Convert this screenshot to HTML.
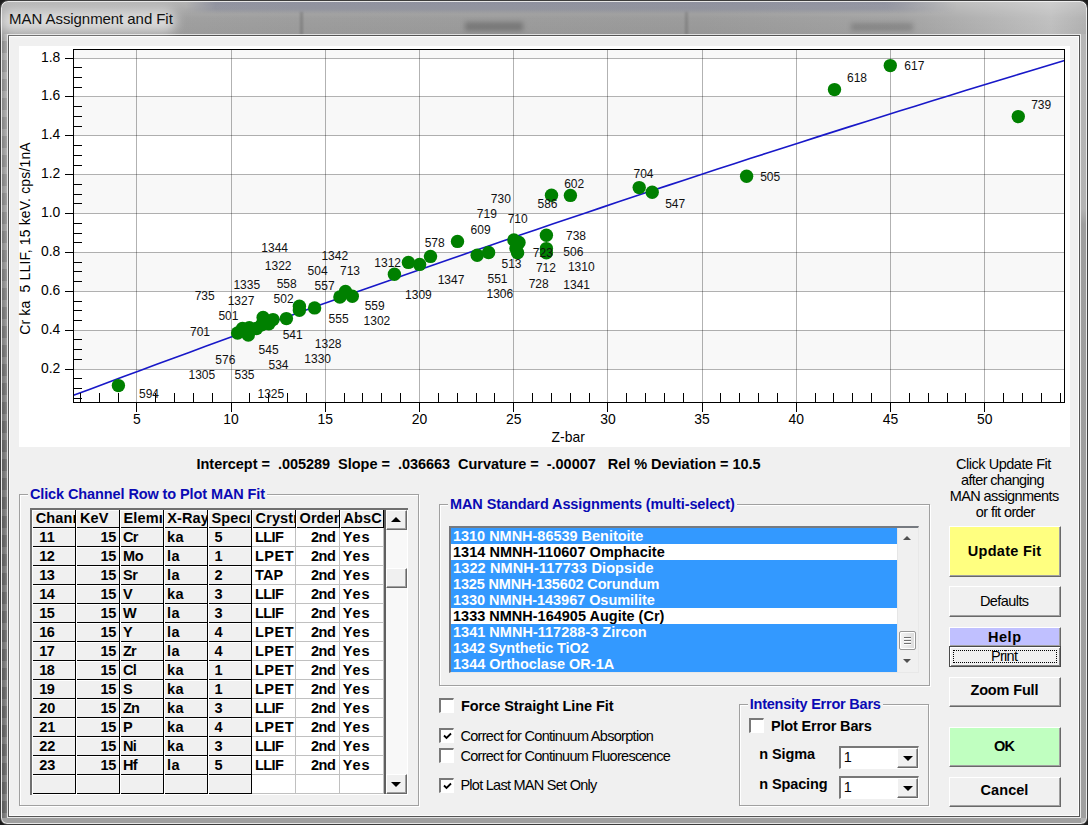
<!DOCTYPE html>
<html><head><meta charset="utf-8"><title>MAN Assignment and Fit</title>
<style>
html,body{margin:0;padding:0}
body{width:1088px;height:825px;overflow:hidden;background:#1c1c1c;position:relative;font-family:"Liberation Sans",sans-serif;font-size:13.33px}
.win{position:absolute;left:0;top:0;width:1086px;height:823px;border:1px solid #3c3c3c;border-radius:8px 8px 7px 7px;
 background:linear-gradient(90deg,#a2a2a2 0,#9c9c9c 300px,#9a9a9a 700px,#a2a2a2 900px,#b6b6b6 1000px,#c0c0c0 1050px,#b0b0b0 1088px);
 box-shadow:inset 0 0 0 1px rgba(255,255,255,.75)}
.glass{position:absolute;left:1px;top:1px;right:1px;height:33px;border-radius:6px 6px 0 0;background:linear-gradient(180deg,rgba(255,255,255,.22) 0,rgba(255,255,255,.12) 8px,rgba(255,255,255,.02) 16px,rgba(0,0,0,.02) 100%)}
.sideL{position:absolute;left:2px;top:34px;width:5px;height:784px;background:repeating-linear-gradient(180deg,rgba(255,255,255,.10) 0,rgba(255,255,255,.10) 7px,rgba(0,0,0,.05) 7px,rgba(0,0,0,.05) 19px),linear-gradient(90deg,rgba(0,0,0,.12),rgba(0,0,0,0) 50%,rgba(255,255,255,.18)),linear-gradient(180deg,#a2a2a2 0,#969696 160px,#7c7c7c 330px,#6e6e6e 420px,#6c6c6c 100%)}
.sideR{position:absolute;left:1081px;top:34px;width:5px;height:784px;background:linear-gradient(180deg,#b6b6b6 0,#b4b4b4 175px,#9e9e9e 190px,#a0a0a0 100%)}
.sideB{position:absolute;left:7px;top:818px;width:1074px;height:5px;background:#a0a0a0}
.client{position:absolute;left:9px;top:36px;width:1070px;height:780px;background:#f0f0f0;box-shadow:0 0 0 1px #555,0 0 0 2px rgba(255,255,255,.7),inset 0 0 0 1px rgba(255,255,255,.85)}
.t{position:absolute;white-space:pre;line-height:normal}
.chart{position:absolute;left:0;top:0}
.plot{position:absolute;left:19px;top:46px;width:1051px;height:401px;background:#fff}
.btn{position:absolute;box-sizing:border-box;background:#f0f0f0;border-top:1px solid #fff;border-left:1px solid #fff;border-right:1px solid #696969;border-bottom:1px solid #696969;box-shadow:inset -1px -1px 0 #a0a0a0}
.frame{position:absolute;box-sizing:border-box;border:1px solid #a0a0a0;box-shadow:1px 1px 0 #fff, inset 1px 1px 0 #fff}
.fx{position:absolute;background:linear-gradient(#fff,#fff) left/1px 100% no-repeat,linear-gradient(#000,#000) right/1px 100% no-repeat,linear-gradient(#fff,#fff) top/100% 1px no-repeat,linear-gradient(#000,#000) bottom/100% 1px no-repeat,#f0f0f0}
.wh{position:absolute;background:#fff;box-sizing:border-box;border-right:1px solid #c0c0c0;border-bottom:1px solid #c0c0c0}
.cb{position:absolute;width:15px;height:15px;box-sizing:border-box;background:#fff;border-top:2px solid #787878;border-left:2px solid #787878;border-right:1px solid #fff;border-bottom:1px solid #fff}
</style></head>
<body>
<div class="win"><div class="glass"></div><div style="position:absolute;left:185px;top:1px;width:770px;height:12px;background:linear-gradient(180deg,rgba(96,102,135,.42),rgba(96,102,135,.30) 60%,rgba(96,102,135,0));-webkit-mask-image:linear-gradient(90deg,transparent,#000 30px,#000 700px,transparent)"></div><div style="position:absolute;left:299px;top:11px;width:3px;height:23px;background:rgba(0,0,0,.16);filter:blur(1px)"></div><div style="position:absolute;left:684px;top:11px;width:3px;height:23px;background:rgba(0,0,0,.14);filter:blur(1px)"></div><div style="position:absolute;left:464px;top:21px;width:58px;height:9px;background:rgba(0,0,0,.22);filter:blur(2.5px)"></div><div style="position:absolute;left:850px;top:22px;width:62px;height:8px;background:rgba(0,0,0,.16);filter:blur(2.5px)"></div></div>
<div class="sideL"></div><div class="sideR"></div><div class="sideB"></div>
<div class="client"></div>
<div style="position:absolute;left:0px;top:10px;width:176px;height:22px;border-radius:11px;background:rgba(255,255,255,.62);filter:blur(6px)"></div>
<span class="t" style="left:9.10px;top:10px;font-size:15px;color:#111;letter-spacing:-0.065px;">MAN Assignment and Fit</span>
<div class="plot"></div>
<svg class="chart" width="1088" height="825" viewBox="0 0 1088 825">
<rect x="73.5" y="49.50" width="991.00" height="8.60" fill="#f8f8f8"/>
<rect x="73.5" y="96.97" width="991.00" height="38.88" fill="#f8f8f8"/>
<rect x="73.5" y="174.73" width="991.00" height="38.87" fill="#f8f8f8"/>
<rect x="73.5" y="252.47" width="991.00" height="38.88" fill="#f8f8f8"/>
<rect x="73.5" y="330.23" width="991.00" height="38.88" fill="#f8f8f8"/>
<line x1="136.50" y1="49.5" x2="136.50" y2="402.5" stroke="rgba(0,0,0,0.30)" stroke-width="1" shape-rendering="crispEdges"/>
<line x1="231.50" y1="49.5" x2="231.50" y2="402.5" stroke="rgba(0,0,0,0.30)" stroke-width="1" shape-rendering="crispEdges"/>
<line x1="325.50" y1="49.5" x2="325.50" y2="402.5" stroke="rgba(0,0,0,0.30)" stroke-width="1" shape-rendering="crispEdges"/>
<line x1="419.50" y1="49.5" x2="419.50" y2="402.5" stroke="rgba(0,0,0,0.30)" stroke-width="1" shape-rendering="crispEdges"/>
<line x1="513.50" y1="49.5" x2="513.50" y2="402.5" stroke="rgba(0,0,0,0.30)" stroke-width="1" shape-rendering="crispEdges"/>
<line x1="607.50" y1="49.5" x2="607.50" y2="402.5" stroke="rgba(0,0,0,0.30)" stroke-width="1" shape-rendering="crispEdges"/>
<line x1="702.50" y1="49.5" x2="702.50" y2="402.5" stroke="rgba(0,0,0,0.30)" stroke-width="1" shape-rendering="crispEdges"/>
<line x1="796.50" y1="49.5" x2="796.50" y2="402.5" stroke="rgba(0,0,0,0.30)" stroke-width="1" shape-rendering="crispEdges"/>
<line x1="890.50" y1="49.5" x2="890.50" y2="402.5" stroke="rgba(0,0,0,0.30)" stroke-width="1" shape-rendering="crispEdges"/>
<line x1="984.50" y1="49.5" x2="984.50" y2="402.5" stroke="rgba(0,0,0,0.30)" stroke-width="1" shape-rendering="crispEdges"/>
<line x1="73.5" y1="369.50" x2="1064.5" y2="369.50" stroke="rgba(0,0,0,0.30)" stroke-width="1" shape-rendering="crispEdges"/>
<line x1="73.5" y1="330.50" x2="1064.5" y2="330.50" stroke="rgba(0,0,0,0.30)" stroke-width="1" shape-rendering="crispEdges"/>
<line x1="73.5" y1="291.50" x2="1064.5" y2="291.50" stroke="rgba(0,0,0,0.30)" stroke-width="1" shape-rendering="crispEdges"/>
<line x1="73.5" y1="252.50" x2="1064.5" y2="252.50" stroke="rgba(0,0,0,0.30)" stroke-width="1" shape-rendering="crispEdges"/>
<line x1="73.5" y1="213.50" x2="1064.5" y2="213.50" stroke="rgba(0,0,0,0.30)" stroke-width="1" shape-rendering="crispEdges"/>
<line x1="73.5" y1="174.50" x2="1064.5" y2="174.50" stroke="rgba(0,0,0,0.30)" stroke-width="1" shape-rendering="crispEdges"/>
<line x1="73.5" y1="135.50" x2="1064.5" y2="135.50" stroke="rgba(0,0,0,0.30)" stroke-width="1" shape-rendering="crispEdges"/>
<line x1="73.5" y1="96.50" x2="1064.5" y2="96.50" stroke="rgba(0,0,0,0.30)" stroke-width="1" shape-rendering="crispEdges"/>
<line x1="73.5" y1="58.50" x2="1064.5" y2="58.50" stroke="rgba(0,0,0,0.30)" stroke-width="1" shape-rendering="crispEdges"/>
<polyline points="73.50,395.33 90.02,389.13 106.53,382.96 123.05,376.80 139.57,370.67 156.08,364.55 172.60,358.46 189.12,352.39 205.63,346.33 222.15,340.30 238.67,334.29 255.18,328.30 271.70,322.34 288.22,316.39 304.73,310.46 321.25,304.56 337.77,298.67 354.28,292.81 370.80,286.97 387.32,281.15 403.83,275.34 420.35,269.57 436.87,263.81 453.38,258.07 469.90,252.35 486.42,246.66 502.93,240.98 519.45,235.33 535.97,229.69 552.48,224.08 569.00,218.49 585.52,212.92 602.03,207.37 618.55,201.84 635.07,196.33 651.58,190.84 668.10,185.38 684.62,179.93 701.13,174.51 717.65,169.11 734.17,163.72 750.68,158.36 767.20,153.02 783.72,147.70 800.23,142.40 816.75,137.12 833.27,131.87 849.78,126.63 866.30,121.42 882.82,116.22 899.33,111.05 915.85,105.90 932.37,100.76 948.88,95.65 965.40,90.56 981.92,85.50 998.43,80.45 1014.95,75.42 1031.47,70.42 1047.98,65.43 1064.50,60.47" fill="none" stroke="#1818c8" stroke-width="1.6"/>
<path d="M80.50 402.5 V393.0 M99.50 402.5 V393.0 M118.50 402.5 V393.0 M136.50 402.5 V412.0 M155.50 402.5 V393.0 M174.50 402.5 V393.0 M193.50 402.5 V393.0 M212.50 402.5 V393.0 M231.50 402.5 V412.0 M249.50 402.5 V393.0 M268.50 402.5 V393.0 M287.50 402.5 V393.0 M306.50 402.5 V393.0 M325.50 402.5 V412.0 M344.50 402.5 V393.0 M362.50 402.5 V393.0 M381.50 402.5 V393.0 M400.50 402.5 V393.0 M419.50 402.5 V412.0 M438.50 402.5 V393.0 M457.50 402.5 V393.0 M476.50 402.5 V393.0 M494.50 402.5 V393.0 M513.50 402.5 V412.0 M532.50 402.5 V393.0 M551.50 402.5 V393.0 M570.50 402.5 V393.0 M589.50 402.5 V393.0 M607.50 402.5 V412.0 M626.50 402.5 V393.0 M645.50 402.5 V393.0 M664.50 402.5 V393.0 M683.50 402.5 V393.0 M702.50 402.5 V412.0 M720.50 402.5 V393.0 M739.50 402.5 V393.0 M758.50 402.5 V393.0 M777.50 402.5 V393.0 M796.50 402.5 V412.0 M815.50 402.5 V393.0 M833.50 402.5 V393.0 M852.50 402.5 V393.0 M871.50 402.5 V393.0 M890.50 402.5 V412.0 M909.50 402.5 V393.0 M928.50 402.5 V393.0 M947.50 402.5 V393.0 M965.50 402.5 V393.0 M984.50 402.5 V412.0 M1003.50 402.5 V393.0 M1022.50 402.5 V393.0 M1041.50 402.5 V393.0 M1060.50 402.5 V393.0 M73.5 398.50 H82.0 M73.5 388.50 H82.0 M73.5 378.50 H82.0 M73.5 369.50 H65.0 M73.5 359.50 H82.0 M73.5 349.50 H82.0 M73.5 339.50 H82.0 M73.5 330.50 H65.0 M73.5 320.50 H82.0 M73.5 310.50 H82.0 M73.5 301.50 H82.0 M73.5 291.50 H65.0 M73.5 281.50 H82.0 M73.5 271.50 H82.0 M73.5 262.50 H82.0 M73.5 252.50 H65.0 M73.5 242.50 H82.0 M73.5 233.50 H82.0 M73.5 223.50 H82.0 M73.5 213.50 H65.0 M73.5 203.50 H82.0 M73.5 194.50 H82.0 M73.5 184.50 H82.0 M73.5 174.50 H65.0 M73.5 165.50 H82.0 M73.5 155.50 H82.0 M73.5 145.50 H82.0 M73.5 135.50 H65.0 M73.5 126.50 H82.0 M73.5 116.50 H82.0 M73.5 106.50 H82.0 M73.5 96.50 H65.0 M73.5 87.50 H82.0 M73.5 77.50 H82.0 M73.5 67.50 H82.0 M73.5 58.50 H65.0" stroke="#000" stroke-width="1" fill="none" shape-rendering="crispEdges"/>
<rect x="73.5" y="49.5" width="991.00" height="353.00" fill="none" stroke="#000" stroke-width="1" shape-rendering="crispEdges"/>
<circle cx="118.4" cy="385.6" r="6.7" fill="#008000"/>
<circle cx="237.6" cy="333" r="6.7" fill="#008000"/>
<circle cx="242.5" cy="328.5" r="6.7" fill="#008000"/>
<circle cx="248.3" cy="335" r="6.7" fill="#008000"/>
<circle cx="249.3" cy="327.8" r="6.7" fill="#008000"/>
<circle cx="256.5" cy="328.5" r="6.7" fill="#008000"/>
<circle cx="263.1" cy="317.5" r="6.7" fill="#008000"/>
<circle cx="261.7" cy="324.8" r="6.7" fill="#008000"/>
<circle cx="268.9" cy="323.7" r="6.7" fill="#008000"/>
<circle cx="273" cy="319.6" r="6.7" fill="#008000"/>
<circle cx="286.4" cy="318.6" r="6.7" fill="#008000"/>
<circle cx="299.4" cy="306.2" r="6.7" fill="#008000"/>
<circle cx="299.4" cy="310.3" r="6.7" fill="#008000"/>
<circle cx="314.6" cy="307.9" r="6.7" fill="#008000"/>
<circle cx="339.9" cy="297" r="6.7" fill="#008000"/>
<circle cx="345.5" cy="291.4" r="6.7" fill="#008000"/>
<circle cx="352.3" cy="296.3" r="6.7" fill="#008000"/>
<circle cx="394.4" cy="274.3" r="6.7" fill="#008000"/>
<circle cx="408.4" cy="262.4" r="6.7" fill="#008000"/>
<circle cx="419.6" cy="264.4" r="6.7" fill="#008000"/>
<circle cx="430.5" cy="256.4" r="6.7" fill="#008000"/>
<circle cx="457.5" cy="241.4" r="6.7" fill="#008000"/>
<circle cx="477.2" cy="255.2" r="6.7" fill="#008000"/>
<circle cx="488.6" cy="252.5" r="6.7" fill="#008000"/>
<circle cx="513.9" cy="239.9" r="6.7" fill="#008000"/>
<circle cx="519" cy="242.4" r="6.7" fill="#008000"/>
<circle cx="516" cy="248.6" r="6.7" fill="#008000"/>
<circle cx="517.6" cy="252.7" r="6.7" fill="#008000"/>
<circle cx="546.4" cy="235.2" r="6.7" fill="#008000"/>
<circle cx="546.4" cy="248.6" r="6.7" fill="#008000"/>
<circle cx="546.4" cy="252.7" r="6.7" fill="#008000"/>
<circle cx="551.5" cy="195.2" r="6.7" fill="#008000"/>
<circle cx="570.4" cy="195.4" r="6.7" fill="#008000"/>
<circle cx="639.2" cy="187.6" r="6.7" fill="#008000"/>
<circle cx="652.2" cy="192.3" r="6.7" fill="#008000"/>
<circle cx="746.6" cy="176.3" r="6.7" fill="#008000"/>
<circle cx="834.5" cy="89.6" r="6.7" fill="#008000"/>
<circle cx="890.3" cy="65.6" r="6.7" fill="#008000"/>
<circle cx="1018.3" cy="116.6" r="6.7" fill="#008000"/>
<g font-family="Liberation Sans, sans-serif" font-size="12" fill="#111">
<text x="261.3" y="251.6">1344</text>
<text x="321.4" y="259.9">1342</text>
<text x="264.8" y="269.8">1322</text>
<text x="374.3" y="266.7">1312</text>
<text x="307.6" y="274.7">504</text>
<text x="340.0" y="274.7">713</text>
<text x="233.4" y="288.7">1335</text>
<text x="276.7" y="287.7">558</text>
<text x="314.6" y="289.7">557</text>
<text x="194.7" y="300.0">735</text>
<text x="227.7" y="304.6">1327</text>
<text x="273.6" y="303.1">502</text>
<text x="364.7" y="309.7">559</text>
<text x="218.4" y="319.6">501</text>
<text x="328.6" y="323.1">555</text>
<text x="363.6" y="324.8">1302</text>
<text x="190.0" y="335.7">701</text>
<text x="282.7" y="338.8">541</text>
<text x="314.8" y="347.8">1328</text>
<text x="258.6" y="353.6">545</text>
<text x="304.3" y="362.9">1330</text>
<text x="215.3" y="363.9">576</text>
<text x="268.5" y="369.0">534</text>
<text x="188.5" y="378.7">1305</text>
<text x="234.5" y="378.7">535</text>
<text x="257.5" y="397.9">1325</text>
<text x="139.0" y="397.6">594</text>
<text x="564.2" y="187.5">602</text>
<text x="490.8" y="202.6">730</text>
<text x="537.5" y="207.7">586</text>
<text x="476.8" y="217.7">719</text>
<text x="507.7" y="222.8">710</text>
<text x="470.6" y="233.7">609</text>
<text x="566.0" y="239.5">738</text>
<text x="424.7" y="246.5">578</text>
<text x="532.8" y="257.2">723</text>
<text x="563.3" y="256.4">506</text>
<text x="501.5" y="267.5">513</text>
<text x="535.9" y="272.3">712</text>
<text x="567.9" y="271.2">1310</text>
<text x="437.7" y="283.6">1347</text>
<text x="487.5" y="282.6">551</text>
<text x="528.7" y="288.3">728</text>
<text x="563.3" y="289.2">1341</text>
<text x="405.1" y="299.0">1309</text>
<text x="486.5" y="298.4">1306</text>
<text x="633.5" y="177.5">704</text>
<text x="665.2" y="207.6">547</text>
<text x="760.2" y="180.8">505</text>
<text x="847.0" y="82.0">618</text>
<text x="904.3" y="69.9">617</text>
<text x="1031.2" y="109.1">739</text>
</g>
<g font-family="Liberation Sans, sans-serif" font-size="13.9" fill="#000">
<text x="60.3" y="372.5" text-anchor="end">0.2</text>
<text x="60.3" y="333.6" text-anchor="end">0.4</text>
<text x="60.3" y="294.8" text-anchor="end">0.6</text>
<text x="60.3" y="255.9" text-anchor="end">0.8</text>
<text x="60.3" y="217.0" text-anchor="end">1.0</text>
<text x="60.3" y="178.1" text-anchor="end">1.2</text>
<text x="60.3" y="139.2" text-anchor="end">1.4</text>
<text x="60.3" y="100.4" text-anchor="end">1.6</text>
<text x="60.3" y="61.5" text-anchor="end">1.8</text>
<text x="136.9" y="423.6" text-anchor="middle">5</text>
<text x="231.1" y="423.6" text-anchor="middle">10</text>
<text x="325.3" y="423.6" text-anchor="middle">15</text>
<text x="419.5" y="423.6" text-anchor="middle">20</text>
<text x="513.7" y="423.6" text-anchor="middle">25</text>
<text x="607.9" y="423.6" text-anchor="middle">30</text>
<text x="702.1" y="423.6" text-anchor="middle">35</text>
<text x="796.3" y="423.6" text-anchor="middle">40</text>
<text x="890.5" y="423.6" text-anchor="middle">45</text>
<text x="984.7" y="423.6" text-anchor="middle">50</text>
<text x="568.2" y="441.5" text-anchor="middle">Z-bar</text>
<text transform="translate(29.7,334.8) rotate(-90)" textLength="192.4" lengthAdjust="spacing" xml:space="preserve">Cr ka  5 LLIF, 15 keV. cps/1nA</text>
</g>
</svg>
<span class="t" style="left:196.50px;top:456px;font-size:14.5px;color:#000;font-weight:bold;letter-spacing:-0.029px;">Intercept =  .005289  Slope =  .036663  Curvature =  -.00007   Rel % Deviation = 10.5</span>
<div class="frame" style="left:19px;top:494px;width:400px;height:312px"></div>
<div style="position:absolute;left:28px;top:488px;width:239px;height:14px;background:#f0f0f0"></div>
<span class="t" style="left:29.90px;top:486px;font-size:14.5px;color:#0a0ab4;font-weight:bold;letter-spacing:-0.101px;">Click Channel Row to Plot MAN Fit</span>
<div style="position:absolute;left:30px;top:508px;width:378px;height:287px;background:#fff;border-top:2px solid #707070;border-left:2px solid #707070;box-sizing:border-box"></div>
<div class="fx" style="left:32px;top:510px;width:44px;height:18px"></div>
<div class="fx" style="left:76px;top:510px;width:44px;height:18px"></div>
<div class="fx" style="left:120px;top:510px;width:44px;height:18px"></div>
<div class="fx" style="left:164px;top:510px;width:44px;height:18px"></div>
<div class="fx" style="left:208px;top:510px;width:44px;height:18px"></div>
<div class="fx" style="left:252px;top:510px;width:44px;height:18px"></div>
<div class="fx" style="left:296px;top:510px;width:44px;height:18px"></div>
<div class="fx" style="left:340px;top:510px;width:44px;height:18px"></div>
<div class="fx" style="left:32px;top:528px;width:44px;height:19px"></div>
<div class="fx" style="left:76px;top:528px;width:44px;height:19px"></div>
<div class="fx" style="left:120px;top:528px;width:44px;height:19px"></div>
<div class="fx" style="left:164px;top:528px;width:44px;height:19px"></div>
<div class="fx" style="left:208px;top:528px;width:44px;height:19px"></div>
<div class="wh" style="left:252px;top:528px;width:44px;height:19px"></div>
<div class="wh" style="left:296px;top:528px;width:44px;height:19px"></div>
<div class="wh" style="left:340px;top:528px;width:44px;height:19px"></div>
<div class="fx" style="left:32px;top:547px;width:44px;height:19px"></div>
<div class="fx" style="left:76px;top:547px;width:44px;height:19px"></div>
<div class="fx" style="left:120px;top:547px;width:44px;height:19px"></div>
<div class="fx" style="left:164px;top:547px;width:44px;height:19px"></div>
<div class="fx" style="left:208px;top:547px;width:44px;height:19px"></div>
<div class="wh" style="left:252px;top:547px;width:44px;height:19px"></div>
<div class="wh" style="left:296px;top:547px;width:44px;height:19px"></div>
<div class="wh" style="left:340px;top:547px;width:44px;height:19px"></div>
<div class="fx" style="left:32px;top:566px;width:44px;height:19px"></div>
<div class="fx" style="left:76px;top:566px;width:44px;height:19px"></div>
<div class="fx" style="left:120px;top:566px;width:44px;height:19px"></div>
<div class="fx" style="left:164px;top:566px;width:44px;height:19px"></div>
<div class="fx" style="left:208px;top:566px;width:44px;height:19px"></div>
<div class="wh" style="left:252px;top:566px;width:44px;height:19px"></div>
<div class="wh" style="left:296px;top:566px;width:44px;height:19px"></div>
<div class="wh" style="left:340px;top:566px;width:44px;height:19px"></div>
<div class="fx" style="left:32px;top:585px;width:44px;height:19px"></div>
<div class="fx" style="left:76px;top:585px;width:44px;height:19px"></div>
<div class="fx" style="left:120px;top:585px;width:44px;height:19px"></div>
<div class="fx" style="left:164px;top:585px;width:44px;height:19px"></div>
<div class="fx" style="left:208px;top:585px;width:44px;height:19px"></div>
<div class="wh" style="left:252px;top:585px;width:44px;height:19px"></div>
<div class="wh" style="left:296px;top:585px;width:44px;height:19px"></div>
<div class="wh" style="left:340px;top:585px;width:44px;height:19px"></div>
<div class="fx" style="left:32px;top:604px;width:44px;height:19px"></div>
<div class="fx" style="left:76px;top:604px;width:44px;height:19px"></div>
<div class="fx" style="left:120px;top:604px;width:44px;height:19px"></div>
<div class="fx" style="left:164px;top:604px;width:44px;height:19px"></div>
<div class="fx" style="left:208px;top:604px;width:44px;height:19px"></div>
<div class="wh" style="left:252px;top:604px;width:44px;height:19px"></div>
<div class="wh" style="left:296px;top:604px;width:44px;height:19px"></div>
<div class="wh" style="left:340px;top:604px;width:44px;height:19px"></div>
<div class="fx" style="left:32px;top:623px;width:44px;height:19px"></div>
<div class="fx" style="left:76px;top:623px;width:44px;height:19px"></div>
<div class="fx" style="left:120px;top:623px;width:44px;height:19px"></div>
<div class="fx" style="left:164px;top:623px;width:44px;height:19px"></div>
<div class="fx" style="left:208px;top:623px;width:44px;height:19px"></div>
<div class="wh" style="left:252px;top:623px;width:44px;height:19px"></div>
<div class="wh" style="left:296px;top:623px;width:44px;height:19px"></div>
<div class="wh" style="left:340px;top:623px;width:44px;height:19px"></div>
<div class="fx" style="left:32px;top:642px;width:44px;height:19px"></div>
<div class="fx" style="left:76px;top:642px;width:44px;height:19px"></div>
<div class="fx" style="left:120px;top:642px;width:44px;height:19px"></div>
<div class="fx" style="left:164px;top:642px;width:44px;height:19px"></div>
<div class="fx" style="left:208px;top:642px;width:44px;height:19px"></div>
<div class="wh" style="left:252px;top:642px;width:44px;height:19px"></div>
<div class="wh" style="left:296px;top:642px;width:44px;height:19px"></div>
<div class="wh" style="left:340px;top:642px;width:44px;height:19px"></div>
<div class="fx" style="left:32px;top:661px;width:44px;height:19px"></div>
<div class="fx" style="left:76px;top:661px;width:44px;height:19px"></div>
<div class="fx" style="left:120px;top:661px;width:44px;height:19px"></div>
<div class="fx" style="left:164px;top:661px;width:44px;height:19px"></div>
<div class="fx" style="left:208px;top:661px;width:44px;height:19px"></div>
<div class="wh" style="left:252px;top:661px;width:44px;height:19px"></div>
<div class="wh" style="left:296px;top:661px;width:44px;height:19px"></div>
<div class="wh" style="left:340px;top:661px;width:44px;height:19px"></div>
<div class="fx" style="left:32px;top:680px;width:44px;height:19px"></div>
<div class="fx" style="left:76px;top:680px;width:44px;height:19px"></div>
<div class="fx" style="left:120px;top:680px;width:44px;height:19px"></div>
<div class="fx" style="left:164px;top:680px;width:44px;height:19px"></div>
<div class="fx" style="left:208px;top:680px;width:44px;height:19px"></div>
<div class="wh" style="left:252px;top:680px;width:44px;height:19px"></div>
<div class="wh" style="left:296px;top:680px;width:44px;height:19px"></div>
<div class="wh" style="left:340px;top:680px;width:44px;height:19px"></div>
<div class="fx" style="left:32px;top:699px;width:44px;height:19px"></div>
<div class="fx" style="left:76px;top:699px;width:44px;height:19px"></div>
<div class="fx" style="left:120px;top:699px;width:44px;height:19px"></div>
<div class="fx" style="left:164px;top:699px;width:44px;height:19px"></div>
<div class="fx" style="left:208px;top:699px;width:44px;height:19px"></div>
<div class="wh" style="left:252px;top:699px;width:44px;height:19px"></div>
<div class="wh" style="left:296px;top:699px;width:44px;height:19px"></div>
<div class="wh" style="left:340px;top:699px;width:44px;height:19px"></div>
<div class="fx" style="left:32px;top:718px;width:44px;height:19px"></div>
<div class="fx" style="left:76px;top:718px;width:44px;height:19px"></div>
<div class="fx" style="left:120px;top:718px;width:44px;height:19px"></div>
<div class="fx" style="left:164px;top:718px;width:44px;height:19px"></div>
<div class="fx" style="left:208px;top:718px;width:44px;height:19px"></div>
<div class="wh" style="left:252px;top:718px;width:44px;height:19px"></div>
<div class="wh" style="left:296px;top:718px;width:44px;height:19px"></div>
<div class="wh" style="left:340px;top:718px;width:44px;height:19px"></div>
<div class="fx" style="left:32px;top:737px;width:44px;height:19px"></div>
<div class="fx" style="left:76px;top:737px;width:44px;height:19px"></div>
<div class="fx" style="left:120px;top:737px;width:44px;height:19px"></div>
<div class="fx" style="left:164px;top:737px;width:44px;height:19px"></div>
<div class="fx" style="left:208px;top:737px;width:44px;height:19px"></div>
<div class="wh" style="left:252px;top:737px;width:44px;height:19px"></div>
<div class="wh" style="left:296px;top:737px;width:44px;height:19px"></div>
<div class="wh" style="left:340px;top:737px;width:44px;height:19px"></div>
<div class="fx" style="left:32px;top:756px;width:44px;height:19px"></div>
<div class="fx" style="left:76px;top:756px;width:44px;height:19px"></div>
<div class="fx" style="left:120px;top:756px;width:44px;height:19px"></div>
<div class="fx" style="left:164px;top:756px;width:44px;height:19px"></div>
<div class="fx" style="left:208px;top:756px;width:44px;height:19px"></div>
<div class="wh" style="left:252px;top:756px;width:44px;height:19px"></div>
<div class="wh" style="left:296px;top:756px;width:44px;height:19px"></div>
<div class="wh" style="left:340px;top:756px;width:44px;height:19px"></div>
<div class="fx" style="left:32px;top:775px;width:44px;height:19px"></div>
<div class="fx" style="left:76px;top:775px;width:44px;height:19px"></div>
<div class="fx" style="left:120px;top:775px;width:44px;height:19px"></div>
<div class="fx" style="left:164px;top:775px;width:44px;height:19px"></div>
<div class="fx" style="left:208px;top:775px;width:44px;height:19px"></div>
<div class="wh" style="left:252px;top:775px;width:44px;height:19px"></div>
<div class="wh" style="left:296px;top:775px;width:44px;height:19px"></div>
<div class="wh" style="left:340px;top:775px;width:44px;height:19px"></div>
<div style="position:absolute;left:384px;top:510px;width:2px;height:284px;background:#606060"></div>
<div style="position:absolute;left:32px;top:510px;width:43px;height:17px;overflow:hidden"><span class="t" style="left:3.8px;top:0px;font-weight:bold;font-size:14.5px;letter-spacing:0.1px">Chanı</span></div>
<div style="position:absolute;left:76px;top:510px;width:43px;height:17px;overflow:hidden"><span class="t" style="left:4.0px;top:0px;font-weight:bold;font-size:14.5px;letter-spacing:0.1px">KeV</span></div>
<div style="position:absolute;left:120px;top:510px;width:43px;height:17px;overflow:hidden"><span class="t" style="left:3.6px;top:0px;font-weight:bold;font-size:14.5px;letter-spacing:0.1px">Elemı</span></div>
<div style="position:absolute;left:164px;top:510px;width:43px;height:17px;overflow:hidden"><span class="t" style="left:3.3px;top:0px;font-weight:bold;font-size:14.5px;letter-spacing:0.1px">X-Ray</span></div>
<div style="position:absolute;left:208px;top:510px;width:43px;height:17px;overflow:hidden"><span class="t" style="left:3.5px;top:0px;font-weight:bold;font-size:14.5px;letter-spacing:0.1px">Specı</span></div>
<div style="position:absolute;left:252px;top:510px;width:43px;height:17px;overflow:hidden"><span class="t" style="left:3.6px;top:0px;font-weight:bold;font-size:14.5px;letter-spacing:0.1px">Crystı</span></div>
<div style="position:absolute;left:296px;top:510px;width:43px;height:17px;overflow:hidden"><span class="t" style="left:3.5px;top:0px;font-weight:bold;font-size:14.5px;letter-spacing:0.1px">Order</span></div>
<div style="position:absolute;left:340px;top:510px;width:43px;height:17px;overflow:hidden"><span class="t" style="left:3.5px;top:0px;font-weight:bold;font-size:14.5px;letter-spacing:0.1px">AbsC</span></div>
<span class="t" style="left:39.30px;top:529px;font-size:14.5px;color:#000;font-weight:bold;letter-spacing:0.271px;">11</span>
<span class="t" style="left:100.50px;top:529px;font-size:14.5px;color:#000;font-weight:bold;letter-spacing:-0.429px;">15</span>
<span class="t" style="left:123.00px;top:529px;font-size:14.5px;color:#000;font-weight:bold;letter-spacing:-0.800px;">Cr</span>
<span class="t" style="left:167.10px;top:529px;font-size:14.5px;color:#000;font-weight:bold;letter-spacing:0.300px;">ka</span>
<span class="t" style="left:214.40px;top:529px;font-size:14.5px;color:#000;font-weight:bold;">5</span>
<span class="t" style="left:255.00px;top:529px;font-size:14.5px;color:#000;font-weight:bold;letter-spacing:-0.600px;">LLIF</span>
<span class="t" style="left:311.10px;top:529px;font-size:14.5px;color:#000;font-weight:bold;letter-spacing:-0.539px;">2nd</span>
<span class="t" style="left:342.70px;top:529px;font-size:14.5px;color:#000;font-weight:bold;letter-spacing:0.950px;">Yes</span>
<span class="t" style="left:39.30px;top:548px;font-size:14.5px;color:#000;font-weight:bold;letter-spacing:-0.529px;">12</span>
<span class="t" style="left:100.50px;top:548px;font-size:14.5px;color:#000;font-weight:bold;letter-spacing:-0.429px;">15</span>
<span class="t" style="left:123.00px;top:548px;font-size:14.5px;color:#000;font-weight:bold;letter-spacing:-0.436px;">Mo</span>
<span class="t" style="left:167.10px;top:548px;font-size:14.5px;color:#000;font-weight:bold;letter-spacing:0.300px;">la</span>
<span class="t" style="left:214.40px;top:548px;font-size:14.5px;color:#000;font-weight:bold;">1</span>
<span class="t" style="left:255.00px;top:548px;font-size:14.5px;color:#000;font-weight:bold;letter-spacing:0.481px;">LPET</span>
<span class="t" style="left:311.10px;top:548px;font-size:14.5px;color:#000;font-weight:bold;letter-spacing:-0.539px;">2nd</span>
<span class="t" style="left:342.70px;top:548px;font-size:14.5px;color:#000;font-weight:bold;letter-spacing:0.950px;">Yes</span>
<span class="t" style="left:39.30px;top:567px;font-size:14.5px;color:#000;font-weight:bold;letter-spacing:-0.529px;">13</span>
<span class="t" style="left:100.50px;top:567px;font-size:14.5px;color:#000;font-weight:bold;letter-spacing:-0.429px;">15</span>
<span class="t" style="left:123.00px;top:567px;font-size:14.5px;color:#000;font-weight:bold;letter-spacing:-0.414px;">Sr</span>
<span class="t" style="left:167.10px;top:567px;font-size:14.5px;color:#000;font-weight:bold;letter-spacing:0.300px;">la</span>
<span class="t" style="left:214.40px;top:567px;font-size:14.5px;color:#000;font-weight:bold;">2</span>
<span class="t" style="left:255.00px;top:567px;font-size:14.5px;color:#000;font-weight:bold;letter-spacing:0.138px;">TAP</span>
<span class="t" style="left:311.10px;top:567px;font-size:14.5px;color:#000;font-weight:bold;letter-spacing:-0.539px;">2nd</span>
<span class="t" style="left:342.70px;top:567px;font-size:14.5px;color:#000;font-weight:bold;letter-spacing:0.950px;">Yes</span>
<span class="t" style="left:39.30px;top:586px;font-size:14.5px;color:#000;font-weight:bold;letter-spacing:-0.529px;">14</span>
<span class="t" style="left:100.50px;top:586px;font-size:14.5px;color:#000;font-weight:bold;letter-spacing:-0.429px;">15</span>
<span class="t" style="left:123.00px;top:586px;font-size:14.5px;color:#000;font-weight:bold;letter-spacing:-0.800px;">V</span>
<span class="t" style="left:167.10px;top:586px;font-size:14.5px;color:#000;font-weight:bold;letter-spacing:0.300px;">ka</span>
<span class="t" style="left:214.40px;top:586px;font-size:14.5px;color:#000;font-weight:bold;">3</span>
<span class="t" style="left:255.00px;top:586px;font-size:14.5px;color:#000;font-weight:bold;letter-spacing:-0.600px;">LLIF</span>
<span class="t" style="left:311.10px;top:586px;font-size:14.5px;color:#000;font-weight:bold;letter-spacing:-0.539px;">2nd</span>
<span class="t" style="left:342.70px;top:586px;font-size:14.5px;color:#000;font-weight:bold;letter-spacing:0.950px;">Yes</span>
<span class="t" style="left:39.30px;top:605px;font-size:14.5px;color:#000;font-weight:bold;letter-spacing:-0.529px;">15</span>
<span class="t" style="left:100.50px;top:605px;font-size:14.5px;color:#000;font-weight:bold;letter-spacing:-0.429px;">15</span>
<span class="t" style="left:123.00px;top:605px;font-size:14.5px;color:#000;font-weight:bold;letter-spacing:-0.800px;">W</span>
<span class="t" style="left:167.10px;top:605px;font-size:14.5px;color:#000;font-weight:bold;letter-spacing:0.300px;">la</span>
<span class="t" style="left:214.40px;top:605px;font-size:14.5px;color:#000;font-weight:bold;">3</span>
<span class="t" style="left:255.00px;top:605px;font-size:14.5px;color:#000;font-weight:bold;letter-spacing:-0.600px;">LLIF</span>
<span class="t" style="left:311.10px;top:605px;font-size:14.5px;color:#000;font-weight:bold;letter-spacing:-0.539px;">2nd</span>
<span class="t" style="left:342.70px;top:605px;font-size:14.5px;color:#000;font-weight:bold;letter-spacing:0.950px;">Yes</span>
<span class="t" style="left:39.30px;top:624px;font-size:14.5px;color:#000;font-weight:bold;letter-spacing:-0.529px;">16</span>
<span class="t" style="left:100.50px;top:624px;font-size:14.5px;color:#000;font-weight:bold;letter-spacing:-0.429px;">15</span>
<span class="t" style="left:123.00px;top:624px;font-size:14.5px;color:#000;font-weight:bold;letter-spacing:-0.800px;">Y</span>
<span class="t" style="left:167.10px;top:624px;font-size:14.5px;color:#000;font-weight:bold;letter-spacing:0.300px;">la</span>
<span class="t" style="left:214.40px;top:624px;font-size:14.5px;color:#000;font-weight:bold;">4</span>
<span class="t" style="left:255.00px;top:624px;font-size:14.5px;color:#000;font-weight:bold;letter-spacing:0.481px;">LPET</span>
<span class="t" style="left:311.10px;top:624px;font-size:14.5px;color:#000;font-weight:bold;letter-spacing:-0.539px;">2nd</span>
<span class="t" style="left:342.70px;top:624px;font-size:14.5px;color:#000;font-weight:bold;letter-spacing:0.950px;">Yes</span>
<span class="t" style="left:39.30px;top:643px;font-size:14.5px;color:#000;font-weight:bold;letter-spacing:-0.529px;">17</span>
<span class="t" style="left:100.50px;top:643px;font-size:14.5px;color:#000;font-weight:bold;letter-spacing:-0.429px;">15</span>
<span class="t" style="left:123.00px;top:643px;font-size:14.5px;color:#000;font-weight:bold;letter-spacing:-0.800px;">Zr</span>
<span class="t" style="left:167.10px;top:643px;font-size:14.5px;color:#000;font-weight:bold;letter-spacing:0.300px;">la</span>
<span class="t" style="left:214.40px;top:643px;font-size:14.5px;color:#000;font-weight:bold;">4</span>
<span class="t" style="left:255.00px;top:643px;font-size:14.5px;color:#000;font-weight:bold;letter-spacing:0.481px;">LPET</span>
<span class="t" style="left:311.10px;top:643px;font-size:14.5px;color:#000;font-weight:bold;letter-spacing:-0.539px;">2nd</span>
<span class="t" style="left:342.70px;top:643px;font-size:14.5px;color:#000;font-weight:bold;letter-spacing:0.950px;">Yes</span>
<span class="t" style="left:39.30px;top:662px;font-size:14.5px;color:#000;font-weight:bold;letter-spacing:-0.529px;">18</span>
<span class="t" style="left:100.50px;top:662px;font-size:14.5px;color:#000;font-weight:bold;letter-spacing:-0.429px;">15</span>
<span class="t" style="left:123.00px;top:662px;font-size:14.5px;color:#000;font-weight:bold;letter-spacing:-0.800px;">Cl</span>
<span class="t" style="left:167.10px;top:662px;font-size:14.5px;color:#000;font-weight:bold;letter-spacing:0.300px;">ka</span>
<span class="t" style="left:214.40px;top:662px;font-size:14.5px;color:#000;font-weight:bold;">1</span>
<span class="t" style="left:255.00px;top:662px;font-size:14.5px;color:#000;font-weight:bold;letter-spacing:0.481px;">LPET</span>
<span class="t" style="left:311.10px;top:662px;font-size:14.5px;color:#000;font-weight:bold;letter-spacing:-0.539px;">2nd</span>
<span class="t" style="left:342.70px;top:662px;font-size:14.5px;color:#000;font-weight:bold;letter-spacing:0.950px;">Yes</span>
<span class="t" style="left:39.30px;top:681px;font-size:14.5px;color:#000;font-weight:bold;letter-spacing:-0.529px;">19</span>
<span class="t" style="left:100.50px;top:681px;font-size:14.5px;color:#000;font-weight:bold;letter-spacing:-0.429px;">15</span>
<span class="t" style="left:123.00px;top:681px;font-size:14.5px;color:#000;font-weight:bold;letter-spacing:-0.800px;">S</span>
<span class="t" style="left:167.10px;top:681px;font-size:14.5px;color:#000;font-weight:bold;letter-spacing:0.300px;">ka</span>
<span class="t" style="left:214.40px;top:681px;font-size:14.5px;color:#000;font-weight:bold;">1</span>
<span class="t" style="left:255.00px;top:681px;font-size:14.5px;color:#000;font-weight:bold;letter-spacing:0.481px;">LPET</span>
<span class="t" style="left:311.10px;top:681px;font-size:14.5px;color:#000;font-weight:bold;letter-spacing:-0.539px;">2nd</span>
<span class="t" style="left:342.70px;top:681px;font-size:14.5px;color:#000;font-weight:bold;letter-spacing:0.950px;">Yes</span>
<span class="t" style="left:39.30px;top:700px;font-size:14.5px;color:#000;font-weight:bold;letter-spacing:-0.129px;">20</span>
<span class="t" style="left:100.50px;top:700px;font-size:14.5px;color:#000;font-weight:bold;letter-spacing:-0.429px;">15</span>
<span class="t" style="left:123.00px;top:700px;font-size:14.5px;color:#000;font-weight:bold;letter-spacing:-0.800px;">Zn</span>
<span class="t" style="left:167.10px;top:700px;font-size:14.5px;color:#000;font-weight:bold;letter-spacing:0.300px;">ka</span>
<span class="t" style="left:214.40px;top:700px;font-size:14.5px;color:#000;font-weight:bold;">3</span>
<span class="t" style="left:255.00px;top:700px;font-size:14.5px;color:#000;font-weight:bold;letter-spacing:-0.600px;">LLIF</span>
<span class="t" style="left:311.10px;top:700px;font-size:14.5px;color:#000;font-weight:bold;letter-spacing:-0.539px;">2nd</span>
<span class="t" style="left:342.70px;top:700px;font-size:14.5px;color:#000;font-weight:bold;letter-spacing:0.950px;">Yes</span>
<span class="t" style="left:39.30px;top:719px;font-size:14.5px;color:#000;font-weight:bold;letter-spacing:-0.129px;">21</span>
<span class="t" style="left:100.50px;top:719px;font-size:14.5px;color:#000;font-weight:bold;letter-spacing:-0.429px;">15</span>
<span class="t" style="left:123.00px;top:719px;font-size:14.5px;color:#000;font-weight:bold;letter-spacing:-0.800px;">P</span>
<span class="t" style="left:167.10px;top:719px;font-size:14.5px;color:#000;font-weight:bold;letter-spacing:0.300px;">ka</span>
<span class="t" style="left:214.40px;top:719px;font-size:14.5px;color:#000;font-weight:bold;">4</span>
<span class="t" style="left:255.00px;top:719px;font-size:14.5px;color:#000;font-weight:bold;letter-spacing:0.481px;">LPET</span>
<span class="t" style="left:311.10px;top:719px;font-size:14.5px;color:#000;font-weight:bold;letter-spacing:-0.539px;">2nd</span>
<span class="t" style="left:342.70px;top:719px;font-size:14.5px;color:#000;font-weight:bold;letter-spacing:0.950px;">Yes</span>
<span class="t" style="left:39.30px;top:738px;font-size:14.5px;color:#000;font-weight:bold;letter-spacing:-0.129px;">22</span>
<span class="t" style="left:100.50px;top:738px;font-size:14.5px;color:#000;font-weight:bold;letter-spacing:-0.429px;">15</span>
<span class="t" style="left:123.00px;top:738px;font-size:14.5px;color:#000;font-weight:bold;letter-spacing:-0.800px;">Ni</span>
<span class="t" style="left:167.10px;top:738px;font-size:14.5px;color:#000;font-weight:bold;letter-spacing:0.300px;">ka</span>
<span class="t" style="left:214.40px;top:738px;font-size:14.5px;color:#000;font-weight:bold;">3</span>
<span class="t" style="left:255.00px;top:738px;font-size:14.5px;color:#000;font-weight:bold;letter-spacing:-0.600px;">LLIF</span>
<span class="t" style="left:311.10px;top:738px;font-size:14.5px;color:#000;font-weight:bold;letter-spacing:-0.539px;">2nd</span>
<span class="t" style="left:342.70px;top:738px;font-size:14.5px;color:#000;font-weight:bold;letter-spacing:0.950px;">Yes</span>
<span class="t" style="left:39.30px;top:757px;font-size:14.5px;color:#000;font-weight:bold;letter-spacing:-0.129px;">23</span>
<span class="t" style="left:100.50px;top:757px;font-size:14.5px;color:#000;font-weight:bold;letter-spacing:-0.429px;">15</span>
<span class="t" style="left:123.00px;top:757px;font-size:14.5px;color:#000;font-weight:bold;letter-spacing:-0.800px;">Hf</span>
<span class="t" style="left:167.10px;top:757px;font-size:14.5px;color:#000;font-weight:bold;letter-spacing:0.300px;">la</span>
<span class="t" style="left:214.40px;top:757px;font-size:14.5px;color:#000;font-weight:bold;">5</span>
<span class="t" style="left:255.00px;top:757px;font-size:14.5px;color:#000;font-weight:bold;letter-spacing:-0.600px;">LLIF</span>
<span class="t" style="left:311.10px;top:757px;font-size:14.5px;color:#000;font-weight:bold;letter-spacing:-0.539px;">2nd</span>
<span class="t" style="left:342.70px;top:757px;font-size:14.5px;color:#000;font-weight:bold;letter-spacing:0.950px;">Yes</span>
<div style="position:absolute;left:386px;top:510px;width:21px;height:284px;background:#f8f8f8"></div>
<div style="position:absolute;left:386px;top:510px;width:21px;height:20px;background:#f0f0f0;box-sizing:border-box;border-top:1px solid #fff;border-left:1px solid #fff;border-right:1px solid #696969;border-bottom:1px solid #696969;box-shadow:inset -1px -1px 0 #a0a0a0,inset 1px 1px 0 #f0f0f0"><div style="position:absolute;left:3.5px;top:5.5px;width:0;height:0;border-left:5px solid transparent;border-right:5px solid transparent;border-bottom:5.5px solid #000"></div></div>
<div style="position:absolute;left:386px;top:568px;width:21px;height:20px;background:#f0f0f0;box-sizing:border-box;border-top:1px solid #fff;border-left:1px solid #fff;border-right:1px solid #696969;border-bottom:1px solid #696969;box-shadow:inset -1px -1px 0 #a0a0a0,inset 1px 1px 0 #f0f0f0"></div>
<div style="position:absolute;left:386px;top:774px;width:21px;height:20px;background:#f0f0f0;box-sizing:border-box;border-top:1px solid #fff;border-left:1px solid #fff;border-right:1px solid #696969;border-bottom:1px solid #696969;box-shadow:inset -1px -1px 0 #a0a0a0,inset 1px 1px 0 #f0f0f0"><div style="position:absolute;left:3.5px;top:7px;width:0;height:0;border-left:5px solid transparent;border-right:5px solid transparent;border-top:5.5px solid #000"></div></div>
<div class="frame" style="left:439px;top:504px;width:491px;height:182px"></div>
<div style="position:absolute;left:448px;top:498px;width:289px;height:14px;background:#f0f0f0"></div>
<span class="t" style="left:450.00px;top:496px;font-size:14.5px;color:#0a0ab4;font-weight:bold;letter-spacing:-0.105px;">MAN Standard Assignments (multi-select)</span>
<div style="position:absolute;left:449px;top:526px;width:470px;height:147px;background:#fff;box-sizing:border-box;border-top:2px solid #767a80;border-left:2px solid #7a7a7a;border-left-color:rgba(110,110,115,.95);border-right:1px solid #e8e8e8;border-bottom:1px solid #e8e8e8"></div>
<div style="position:absolute;left:451px;top:528px;width:446px;height:16px;background:#3399ff"></div>
<span class="t" style="left:453.00px;top:528px;font-size:14.5px;color:#fff;font-weight:bold;letter-spacing:-0.024px;">1310 NMNH-86539 Benitoite</span>
<span class="t" style="left:453.00px;top:544px;font-size:14.5px;color:#000;font-weight:bold;letter-spacing:0.022px;">1314 NMNH-110607 Omphacite</span>
<div style="position:absolute;left:451px;top:560px;width:446px;height:16px;background:#3399ff"></div>
<span class="t" style="left:453.00px;top:560px;font-size:14.5px;color:#fff;font-weight:bold;letter-spacing:0.127px;">1322 NMNH-117733 Diopside</span>
<div style="position:absolute;left:451px;top:576px;width:446px;height:16px;background:#3399ff"></div>
<span class="t" style="left:453.00px;top:576px;font-size:14.5px;color:#fff;font-weight:bold;letter-spacing:-0.159px;">1325 NMNH-135602 Corundum</span>
<div style="position:absolute;left:451px;top:592px;width:446px;height:16px;background:#3399ff"></div>
<span class="t" style="left:453.00px;top:592px;font-size:14.5px;color:#fff;font-weight:bold;letter-spacing:-0.052px;">1330 NMNH-143967 Osumilite</span>
<span class="t" style="left:453.00px;top:608px;font-size:14.5px;color:#000;font-weight:bold;">1333 NMNH-164905 Augite (Cr)</span>
<div style="position:absolute;left:451px;top:624px;width:446px;height:16px;background:#3399ff"></div>
<span class="t" style="left:453.00px;top:624px;font-size:14.5px;color:#fff;font-weight:bold;letter-spacing:0.012px;">1341 NMNH-117288-3 Zircon</span>
<div style="position:absolute;left:451px;top:640px;width:446px;height:16px;background:#3399ff"></div>
<span class="t" style="left:453.00px;top:640px;font-size:14.5px;color:#fff;font-weight:bold;letter-spacing:-0.097px;">1342 Synthetic TiO2</span>
<div style="position:absolute;left:451px;top:656px;width:446px;height:16px;background:#3399ff"></div>
<span class="t" style="left:453.00px;top:656px;font-size:14.5px;color:#fff;font-weight:bold;letter-spacing:0.001px;">1344 Orthoclase OR-1A</span>
<div style="position:absolute;left:897px;top:528px;width:21px;height:144px;background:#f0f0f0;border-left:1px solid #e6e6e6;box-sizing:border-box"></div>
<div style="position:absolute;left:903px;top:536px;width:0px;height:0px;border-left:4px solid transparent;border-right:4px solid transparent;border-bottom:4px solid #505050"></div>
<div style="position:absolute;left:903px;top:659px;width:0px;height:0px;border-left:4px solid transparent;border-right:4px solid transparent;border-top:4px solid #505050"></div>
<div style="position:absolute;left:899px;top:631px;width:17px;height:19px;box-sizing:border-box;border:1px solid #979797;border-radius:2px;background:linear-gradient(90deg,#f4f4f4,#dcdcdc);box-shadow:inset 0 0 0 1px #fff"><div style="position:absolute;left:4px;top:5px;width:7px;height:1px;background:#707070;box-shadow:0 1px 0 #fff,0 3px 0 #707070,0 4px 0 #fff,0 6px 0 #707070,0 7px 0 #fff"></div></div>
<div class="cb" style="left:439px;top:698px"></div>
<span class="t" style="left:461.00px;top:698px;font-size:14.5px;color:#000;font-weight:bold;letter-spacing:-0.058px;">Force Straight Line Fit</span>
<div class="cb" style="left:439px;top:728px"><svg width="9" height="9" viewBox="0 0 9 9" style="position:absolute;left:1.5px;top:1.5px"><path d="M1 3.5 L3.5 6 L8 1.5" stroke="#000" stroke-width="1.8" fill="none"/></svg></div>
<span class="t" style="left:460.40px;top:728px;font-size:14.5px;color:#000;letter-spacing:-0.700px;">Correct for Continuum Absorption</span>
<div class="cb" style="left:439px;top:748px"></div>
<span class="t" style="left:460.40px;top:748px;font-size:14.5px;color:#000;letter-spacing:-0.706px;">Correct for Continuum Fluorescence</span>
<div class="cb" style="left:439px;top:778px"><svg width="9" height="9" viewBox="0 0 9 9" style="position:absolute;left:1.5px;top:1.5px"><path d="M1 3.5 L3.5 6 L8 1.5" stroke="#000" stroke-width="1.8" fill="none"/></svg></div>
<span class="t" style="left:460.40px;top:777px;font-size:14.5px;color:#000;letter-spacing:-0.734px;">Plot Last MAN Set Only</span>
<div class="frame" style="left:739px;top:704px;width:190px;height:102px"></div>
<div style="position:absolute;left:748px;top:698px;width:135px;height:14px;background:#f0f0f0"></div>
<span class="t" style="left:749.70px;top:696px;font-size:14.5px;color:#0a0ab4;font-weight:bold;letter-spacing:-0.220px;">Intensity Error Bars</span>
<div class="cb" style="left:749px;top:718px"></div>
<span class="t" style="left:770.90px;top:718px;font-size:14.5px;color:#000;font-weight:bold;letter-spacing:-0.153px;">Plot Error Bars</span>
<span class="t" style="left:759.30px;top:746px;font-size:14.5px;color:#000;font-weight:bold;letter-spacing:-0.100px;">n Sigma</span>
<span class="t" style="left:759.30px;top:776px;font-size:14.5px;color:#000;font-weight:bold;letter-spacing:-0.123px;">n Spacing</span>
<div style="position:absolute;left:839px;top:746px;width:80px;height:23px;background:#fff;box-sizing:border-box;border-top:2px solid #787878;border-left:2px solid #787878;border-right:1px solid #fff;border-bottom:1px solid #fff"></div>
<div style="position:absolute;left:897px;top:748px;width:21px;height:20px;background:#f0f0f0;box-sizing:border-box;border-top:1px solid #fff;border-left:1px solid #fff;border-right:1px solid #696969;border-bottom:1px solid #696969;box-shadow:inset -1px -1px 0 #a0a0a0,inset 1px 1px 0 #f0f0f0"><div style="position:absolute;left:4.5px;top:7px;width:0;height:0;border-left:5px solid transparent;border-right:5px solid transparent;border-top:5.5px solid #000"></div></div>
<span class="t" style="left:843.70px;top:749px;font-size:14.5px;color:#000;">1</span>
<div style="position:absolute;left:839px;top:776px;width:80px;height:23px;background:#fff;box-sizing:border-box;border-top:2px solid #787878;border-left:2px solid #787878;border-right:1px solid #fff;border-bottom:1px solid #fff"></div>
<div style="position:absolute;left:897px;top:778px;width:21px;height:20px;background:#f0f0f0;box-sizing:border-box;border-top:1px solid #fff;border-left:1px solid #fff;border-right:1px solid #696969;border-bottom:1px solid #696969;box-shadow:inset -1px -1px 0 #a0a0a0,inset 1px 1px 0 #f0f0f0"><div style="position:absolute;left:4.5px;top:7px;width:0;height:0;border-left:5px solid transparent;border-right:5px solid transparent;border-top:5.5px solid #000"></div></div>
<span class="t" style="left:843.70px;top:779px;font-size:14.5px;color:#000;">1</span>
<span class="t" style="left:956.10px;top:456px;font-size:14.5px;color:#000;letter-spacing:-0.476px;">Click Update Fit</span>
<span class="t" style="left:961.00px;top:472px;font-size:14.5px;color:#000;letter-spacing:-0.638px;">after changing</span>
<span class="t" style="left:949.70px;top:488px;font-size:14.5px;color:#000;letter-spacing:-0.582px;">MAN assignments</span>
<span class="t" style="left:975.80px;top:504px;font-size:14.5px;color:#000;letter-spacing:-0.589px;">or fit order</span>
<div class="btn" style="left:949px;top:526px;width:112px;height:51px;background:#ffff80;"></div>
<span class="t" style="left:967.80px;top:543px;font-size:14.5px;color:#000;font-weight:bold;letter-spacing:0.279px;">Update Fit</span>
<div class="btn" style="left:949px;top:586px;width:112px;height:31px;background:#f0f0f0;"></div>
<span class="t" style="left:979.90px;top:593px;font-size:14.5px;color:#000;letter-spacing:-0.570px;">Defaults</span>
<div class="btn" style="left:949px;top:627px;width:112px;height:20px;background:#c0c0ff;"></div>
<span class="t" style="left:988.00px;top:629px;font-size:14.5px;color:#000;font-weight:bold;letter-spacing:0.526px;">Help</span>
<div style="position:absolute;left:949px;top:646px;width:112px;height:21px;background:#f0f0f0;box-sizing:border-box;border:1px solid #4a4a4a;box-shadow:inset 1px 1px 0 #fff,inset -1px -1px 0 #808080"><div style="position:absolute;left:3px;top:3px;right:3px;bottom:3px;border:1px dotted #000"></div></div>
<span class="t" style="left:991.05px;top:648px;font-size:14.5px;color:#000;letter-spacing:-0.729px;">Print</span>
<div class="btn" style="left:949px;top:677px;width:112px;height:30px;background:#f0f0f0;"></div>
<span class="t" style="left:970.45px;top:682px;font-size:14.5px;color:#000;font-weight:bold;letter-spacing:-0.146px;">Zoom Full</span>
<div class="btn" style="left:949px;top:727px;width:112px;height:40px;background:#c0ffc0;"></div>
<span class="t" style="left:994.02px;top:738px;font-size:14.5px;color:#000;font-weight:bold;letter-spacing:-0.800px;">OK</span>
<div class="btn" style="left:949px;top:777px;width:112px;height:30px;background:#f0f0f0;"></div>
<span class="t" style="left:980.60px;top:782px;font-size:14.5px;color:#000;font-weight:bold;letter-spacing:0.050px;">Cancel</span>
</body></html>
